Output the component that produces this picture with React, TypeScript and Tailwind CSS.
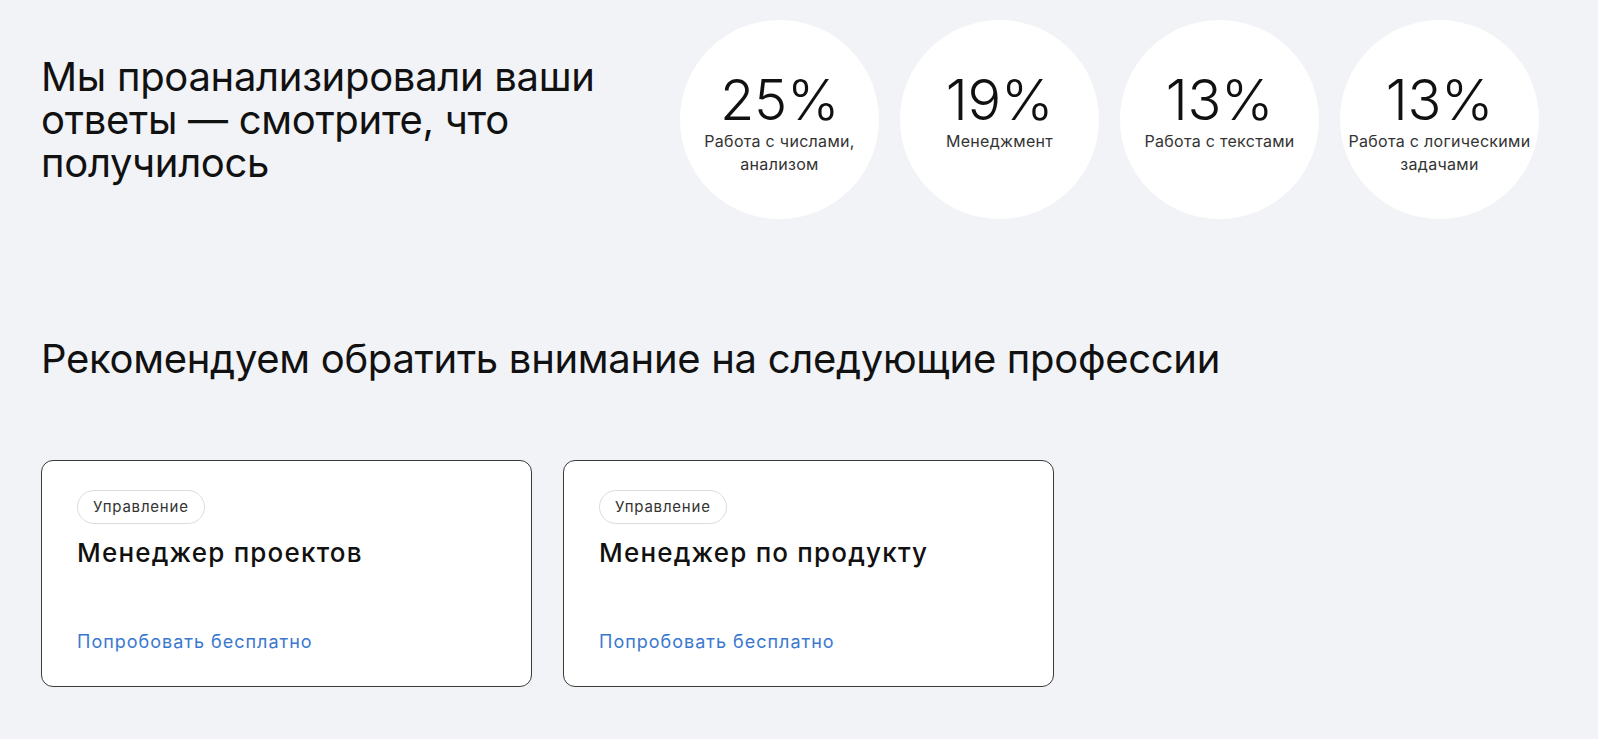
import React from 'react';

const stats = [
  { value: '25%', label: 'Работа с числами, анализом' },
  { value: '19%', label: 'Менеджмент' },
  { value: '13%', label: 'Работа с текстами' },
  { value: '13%', label: 'Работа с логическими задачами' },
];

const professions = [
  { tag: 'Управление', title: 'Менеджер проектов' },
  { tag: 'Управление', title: 'Менеджер по продукту' },
];

export default function App() {
  return (
    <div
      className="min-h-screen bg-[#f2f3f7] text-[#111] pl-[41px] pt-[20px]"
      style={{ fontFamily: 'Inter, "Noto Sans", sans-serif' }}
    >
      {/* Results */}
      <div className="flex items-center">
        <h1 className="w-[639px] pr-[40px] shrink-0 text-[40px] leading-[43px] font-normal tracking-[-0.3px]">
          Мы проанализировали ваши ответы — смотрите, что получилось
        </h1>
        <div className="flex gap-[21px]">
          {stats.map((s, i) => (
            <div
              key={i}
              className="w-[199px] h-[199px] rounded-full bg-white flex flex-col items-center pt-[50px]"
            >
              <span className="text-[56px] leading-[60px] font-light tracking-[-0.3px]">{s.value}</span>
              <span className="px-[4px] text-center text-[16px] leading-[23px] tracking-[0.3px] text-[#333]">
                {s.label}
              </span>
            </div>
          ))}
        </div>
      </div>

      {/* Recommendations */}
      <h2 className="mt-[118px] text-[40px] leading-[44px] font-normal tracking-[-0.3px]">
        Рекомендуем обратить внимание на следующие профессии
      </h2>

      <div className="mt-[79px] flex gap-[31px]">
        {professions.map((p, i) => (
          <div
            key={i}
            className="w-[491px] h-[227px] rounded-[12px] border border-[#3a3a3a] bg-white pl-[35px] pt-[29px] flex flex-col"
          >
            <span className="self-start rounded-full border border-[#dcdcdc] px-[15px] h-[34px] flex items-center text-[15px] tracking-[0.8px] text-[#333]">
              {p.tag}
            </span>
            <span className="mt-[12px] text-[26px] leading-[34px] font-medium tracking-[1.2px]">{p.title}</span>
            <a href="#" className="mt-auto mb-[32px] text-[18px] leading-[24px] tracking-[1px] text-[#3a78d0]">
              Попробовать бесплатно
            </a>
          </div>
        ))}
      </div>
    </div>
  );
}
